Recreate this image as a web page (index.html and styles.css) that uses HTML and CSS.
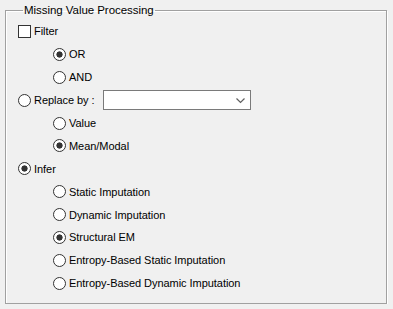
FILE: index.html
```html
<!DOCTYPE html>
<html lang="en">
<head>
<meta charset="UTF-8">
<title>Missing Value Processing</title>
<link rel="stylesheet" href="styles.css">
</head>
<body>

<fieldset class="group">
  <legend>Missing Value Processing</legend>

  <label class="row"><input type="checkbox" class="check"> Filter</label>
  <label class="row sub"><input type="radio" name="filterop" class="radio" checked> OR</label>
  <label class="row sub"><input type="radio" name="filterop" class="radio"> AND</label>

  <div class="row">
    <label class="replace-label"><input type="radio" name="mode" class="radio"> Replace by :</label>
    <div class="combo">
      <svg width="9" height="6" viewBox="0 0 9 6"><path d="M0.5 0.5 L4.5 4.5 L8.5 0.5" fill="none" stroke="#606060" stroke-width="1.2"/></svg>
    </div>
  </div>
  <label class="row sub"><input type="radio" name="replace" class="radio"> Value</label>
  <label class="row sub"><input type="radio" name="replace" class="radio" checked> Mean/Modal</label>

  <label class="row"><input type="radio" name="mode" class="radio" checked> Infer</label>
  <label class="row sub"><input type="radio" name="infer" class="radio"> Static Imputation</label>
  <label class="row sub"><input type="radio" name="infer" class="radio"> Dynamic Imputation</label>
  <label class="row sub"><input type="radio" name="infer" class="radio" checked> Structural EM</label>
  <label class="row sub"><input type="radio" name="infer" class="radio"> Entropy-Based Static Imputation</label>
  <label class="row sub"><input type="radio" name="infer" class="radio"> Entropy-Based Dynamic Imputation</label>
</fieldset>

</body>
</html>
```
FILE: styles.css
```css
body {
    margin: 0;
    background-color: #f0f0f0;
    font-family: "Liberation Sans", Arial, sans-serif;
    font-size: 11px;
    letter-spacing: -0.05px;
    color: #000;
}

.group {
    margin: 3px 6px 0 5px;
    padding: 3px 0 0 12px;
    height: 296px;
    border: 1px solid #a0a0a0;
    box-shadow: 1px 1px 0 #fff, inset 1px 1px 0 #fff;
}

.group legend {
    padding: 0 1px;
    margin-left: 5px;
    line-height: 14px;
    font-size: 11.5px;
}

.row {
    display: flex;
    align-items: center;
    height: 22.9px;
}
.row.sub { padding-left: 35px; }

.replace-label {
    display: flex;
    align-items: center;
    width: 85px;
}

input.radio, input.check {
    appearance: none;
    -webkit-appearance: none;
    margin: 0 3px 0 0;
    width: 13px; height: 13px;
    border: 1px solid #333;
    background: #fff;
    flex: none;
}
input.radio { border-radius: 50%; }
input.radio:checked {
    background: radial-gradient(circle, #333 0, #333 2.8px, #fff 3.4px);
}

.combo {
    width: 141px;
    height: 18px;
    border: 1px solid #7a7a7a;
    background: #fff;
    display: flex;
    align-items: center;
    justify-content: flex-end;
    padding-right: 5px;
    box-sizing: content-box;
}
.combo svg { display: block; margin-top: 1px; }
```
